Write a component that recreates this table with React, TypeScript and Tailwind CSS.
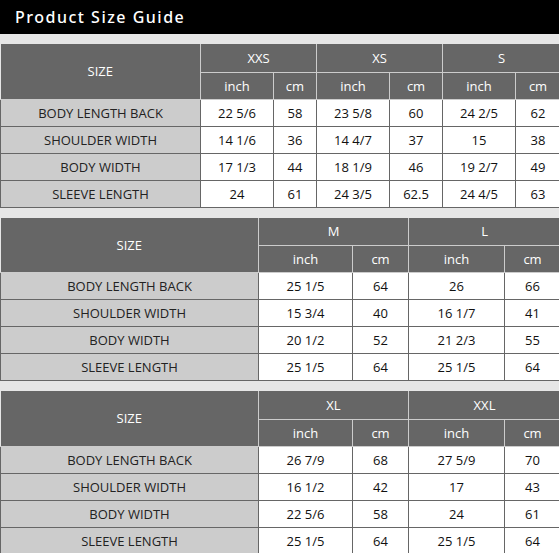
type SizeCol = { name: string; inch: number; cm: number };
type Section = {
  labelWidth: number;
  sizes: SizeCol[];
  rows: [string, string[]][];
};

const sections: Section[] = [
  {
    labelWidth: 200,
    sizes: [
      { name: "XXS", inch: 73, cm: 43 },
      { name: "XS", inch: 73, cm: 53 },
      { name: "S", inch: 73, cm: 45 },
    ],
    rows: [
      ["BODY LENGTH BACK", ["22 5/6", "58", "23 5/8", "60", "24 2/5", "62"]],
      ["SHOULDER WIDTH", ["14 1/6", "36", "14 4/7", "37", "15", "38"]],
      ["BODY WIDTH", ["17 1/3", "44", "18 1/9", "46", "19 2/7", "49"]],
      ["SLEEVE LENGTH", ["24", "61", "24 3/5", "62.5", "24 4/5", "63"]],
    ],
  },
  {
    labelWidth: 258,
    sizes: [
      { name: "M", inch: 94, cm: 56 },
      { name: "L", inch: 96, cm: 56 },
    ],
    rows: [
      ["BODY LENGTH BACK", ["25 1/5", "64", "26", "66"]],
      ["SHOULDER WIDTH", ["15 3/4", "40", "16 1/7", "41"]],
      ["BODY WIDTH", ["20 1/2", "52", "21 2/3", "55"]],
      ["SLEEVE LENGTH", ["25 1/5", "64", "25 1/5", "64"]],
    ],
  },
  {
    labelWidth: 258,
    sizes: [
      { name: "XL", inch: 94, cm: 56 },
      { name: "XXL", inch: 96, cm: 56 },
    ],
    rows: [
      ["BODY LENGTH BACK", ["26 7/9", "68", "27 5/9", "70"]],
      ["SHOULDER WIDTH", ["16 1/2", "42", "17", "43"]],
      ["BODY WIDTH", ["22 5/6", "58", "24", "61"]],
      ["SLEEVE LENGTH", ["25 1/5", "64", "25 1/5", "64"]],
    ],
  },
];

const SizeTable = ({ section }: { section: Section }) => {
  const total =
    section.labelWidth + section.sizes.reduce((s, c) => s + c.inch + c.cm, 0);
  return (
    <table
      className="table-fixed border-collapse text-[13px] leading-none"
      style={{ width: total }}
    >
      <colgroup>
        <col style={{ width: section.labelWidth }} />
        {section.sizes.map((s) => [
          <col key={s.name + "i"} style={{ width: s.inch }} />,
          <col key={s.name + "c"} style={{ width: s.cm }} />,
        ])}
      </colgroup>
      <thead className="bg-[#666666] text-white">
        <tr className="h-[28px]">
          <th
            rowSpan={2}
            className="border-r border-b border-[#cccccc] font-normal pt-[1px]"
          >
            SIZE
          </th>
          {section.sizes.map((s) => (
            <th
              key={s.name}
              colSpan={2}
              className="border-r border-b border-[#cccccc] font-normal pt-[1px]"
            >
              {s.name}
            </th>
          ))}
        </tr>
        <tr className="h-[27px]">
          {section.sizes.map((s) => [
            <th
              key={s.name + "i"}
              className="border-r border-b border-[#cccccc] font-normal pt-[1px]"
            >
              inch
            </th>,
            <th
              key={s.name + "c"}
              className="border-r border-b border-[#cccccc] font-normal pt-[1px]"
            >
              cm
            </th>,
          ])}
        </tr>
      </thead>
      <tbody>
        {section.rows.map(([label, values]) => (
          <tr key={label} className="h-[27px]">
            <td className="border border-[#666666] bg-[#cccccc] text-center text-[#222222] pt-[1px]">
              {label}
            </td>
            {values.map((v, i) => (
              <td
                key={i}
                className="border border-[#666666] bg-white text-center text-[#111111] pt-[1px]"
              >
                {v}
              </td>
            ))}
          </tr>
        ))}
      </tbody>
    </table>
  );
};

export default function App() {
  return (
    <div className="w-[559px] h-[553px] overflow-hidden bg-[#e6e6e6] font-['Open_Sans','Noto_Sans',sans-serif]">
      <div className="h-[34px] bg-black flex items-center pl-[15px]">
        <h1 className="text-white text-[16px] font-medium tracking-[1.5px] font-['Noto_Sans',sans-serif]">
          Product Size Guide
        </h1>
      </div>
      <div className="flex flex-col gap-[10px] pt-[10px]">
        {sections.map((s, i) => (
          <SizeTable key={i} section={s} />
        ))}
      </div>
    </div>
  );
}
